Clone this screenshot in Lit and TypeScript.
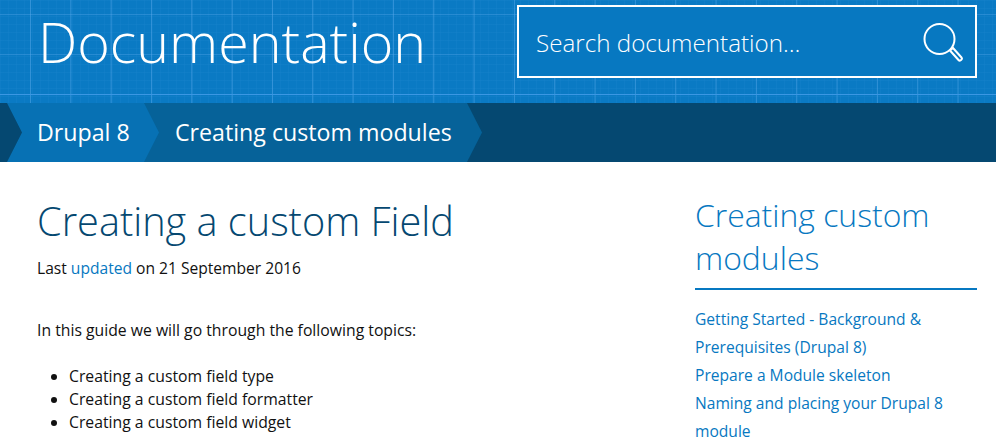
import { LitElement, html, css } from "lit";
import { customElement } from "lit/decorators.js";

const grid = [
  "linear-gradient(#3a97e4, #3a97e4) 0 94px / 100% 1px no-repeat",
  "linear-gradient(90deg, rgba(90,170,235,0.5) 1px, transparent 1px) 30px 0 / 40.33px 100%",
  "linear-gradient(rgba(90,170,235,0.35) 1px, transparent 1px) 0 14px / 100% 40px",
  "linear-gradient(90deg, rgba(60,150,225,0.1) 1px, transparent 1px) 0 0 / 8px 8px",
  "linear-gradient(rgba(60,150,225,0.1) 1px, transparent 1px) 0 0 / 8px 8px",
  "#0a7ac4",
].join(",");

@customElement("app-root")
export class AppRoot extends LitElement {
  static styles = css`
    :host {
      display: block;
      font-family: "Open Sans", "Noto Sans", sans-serif;
      color: #111;
      height: 444px;
      overflow: hidden;
      background: #fff;
    }
    .banner {
      height: 103px;
      box-sizing: border-box;
      padding: 5px 19px 0 38px;
      display: flex;
      justify-content: space-between;
      align-items: flex-start;
    }
    .banner h1 {
      margin: -3px 0 0;
      font-weight: 300;
      font-size: 55.6px;
      line-height: 80px;
      color: #fff;
    }
    .search {
      box-sizing: border-box;
      width: 460px;
      height: 73px;
      border: 2px solid #fff;
      background: #0778c1;
      display: flex;
      align-items: center;
      justify-content: space-between;
      padding: 0 12px 0 17px;
      color: #fff;
      font-size: 24.2px;
      font-weight: 300;
    }
    .search span {
      padding-top: 2px;
    }
    .crumbs {
      height: 59px;
      background: #054871;
      display: flex;
    }
    .crumb {
      display: flex;
      align-items: center;
      color: #fff;
      font-size: 23.2px;
      padding-bottom: 2px;
    }
    .first {
      width: 159px;
      padding-left: 37px;
      box-sizing: border-box;
      background: #0771b4;
      clip-path: polygon(7px 0, 144px 0, 159px 50%, 144px 100%, 7px 100%, 22px 50%);
      position: relative;
      z-index: 1;
      margin-right: -15px;
    }
    .second {
      width: 338px;
      padding-left: 31px;
      box-sizing: border-box;
      background: #066299;
      clip-path: polygon(0 0, 323px 0, 338px 50%, 323px 100%, 0 100%);
    }
    .content {
      display: grid;
      grid-template-columns: 1fr 282px;
      column-gap: 40px;
      padding: 0 19px 0 37px;
    }
    h2 {
      margin: 30px 0 0;
      font-weight: 300;
      font-size: 39.7px;
      line-height: 58px;
      color: #054871;
    }
    .updated {
      margin: 6px 0 0;
      font-size: 15.6px;
      line-height: 24px;
    }
    a {
      color: #0778c1;
      text-decoration: none;
    }
    .intro {
      margin: 38px 0 0;
      font-size: 15.75px;
      line-height: 24px;
    }
    ul {
      margin: 23px 0 0;
      padding-left: 32px;
      font-size: 15.75px;
      line-height: 23px;
    }
    aside h3 {
      margin: 31px 0 0;
      font-weight: 300;
      font-size: 31.9px;
      line-height: 43px;
      color: #0778c1;
      padding-bottom: 9px;
      border-bottom: 2px solid #0778c1;
    }
    .nav {
      margin-top: 15px;
      font-size: 15.6px;
      line-height: 28px;
    }
    .nav a {
      display: block;
    }
  `;

  render() {
    return html`
      <header class="banner" style="background:${grid}">
        <h1>Documentation</h1>
        <div class="search">
          <span>Search documentation…</span>
          <svg width="42" height="42" viewBox="0 0 42 42" fill="none" stroke="#fff">
            <circle cx="18.5" cy="18" r="15" stroke-width="2" />
            <path d="M29 29.5l3-2.5 8.5 9.5a1.6 1.6 0 0 1-.2 2.2l-.6.5a1.6 1.6 0 0 1-2.2-.2z" stroke-width="2" />
          </svg>
        </div>
      </header>
      <nav class="crumbs">
        <div class="crumb first">Drupal 8</div>
        <div class="crumb second">Creating custom modules</div>
      </nav>
      <div class="content">
        <main>
          <h2>Creating a custom Field</h2>
          <p class="updated">Last <a href="#">updated</a> on 21 September 2016</p>
          <p class="intro">In this guide we will go through the following topics:</p>
          <ul>
            <li>Creating a custom field type</li>
            <li>Creating a custom field formatter</li>
            <li>Creating a custom field widget</li>
          </ul>
        </main>
        <aside>
          <h3>Creating custom modules</h3>
          <div class="nav">
            <a href="#">Getting Started - Background &amp; Prerequisites (Drupal 8)</a>
            <a href="#">Prepare a Module skeleton</a>
            <a href="#">Naming and placing your Drupal 8 module</a>
          </div>
        </aside>
      </div>
    `;
  }
}
